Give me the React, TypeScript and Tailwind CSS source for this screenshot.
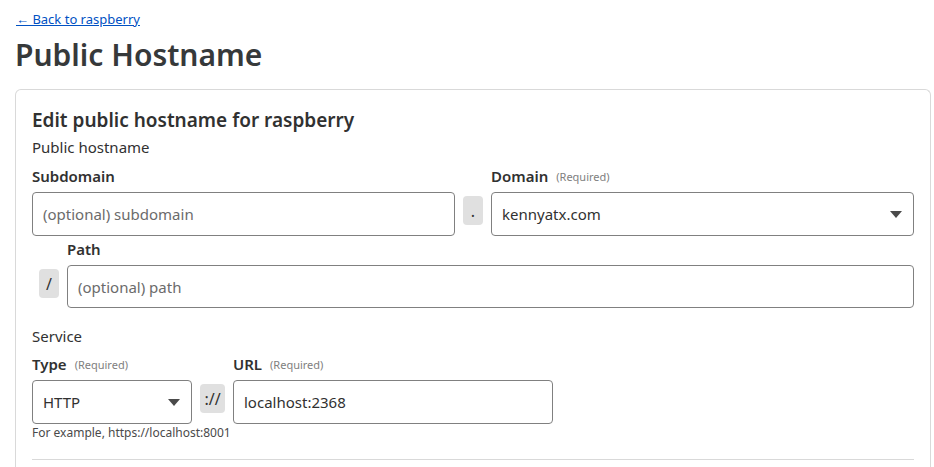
import React from 'react';

const font = { fontFamily: '"Noto Sans", "Open Sans", sans-serif' };

const Req = () => (
  <span className="ml-2 align-[1px] text-[11px] font-normal leading-none text-[#808080]">(Required)</span>
);

const Caret = () => (
  <svg width="12" height="7" viewBox="0 0 12 7" className="fill-[#4a4a4a]">
    <path d="M0 0h12L6 7z" />
  </svg>
);

const Chip = ({ text, w }: { text: string; w: string }) => (
  <div className={`flex h-[29px] ${w} items-center justify-center rounded-[4px] bg-[#e0e0e0] text-[16px] text-[#313131]`}>
    {text}
  </div>
);

export default function App() {
  return (
    <div className="min-h-screen bg-white pl-[15px] pr-[3px] pt-[6px] text-[#313131]" style={font}>
      <a href="#" className="ml-px text-[13px] text-[#0051c3] underline">
        ← Back to raspberry
      </a>
      <h1 className="mt-[5px] text-[30px] font-semibold leading-[40px] text-[#36393a]">Public Hostname</h1>

      <div className="mt-[14px] rounded-t-[6px] border border-b-0 border-[#d9d9d9] px-4 pt-[17px] pb-3">
        <h2 className="text-[19px] font-semibold leading-[26px]">Edit public hostname for raspberry</h2>
        <div className="mt-[4px] text-[15px] leading-[20px]">Public hostname</div>

        {/* subdomain / domain row */}
        <div className="mt-[9px] flex items-end gap-2">
          <div className="flex-1">
            <div className="h-[20px] text-[15px] font-semibold leading-[20px]">Subdomain</div>
            <input
              placeholder="(optional) subdomain"
              className="mt-[6px] h-[44px] w-full rounded-[4px] border border-[#808080] px-[10px] text-[15px] placeholder:text-[#6b6b6b] outline-none"
            />
          </div>
          <div className="mb-[11px]">
            <Chip text="." w="w-[20px]" />
          </div>
          <div className="flex-1">
            <div className="h-[20px] text-[15px] font-semibold leading-[20px]">
              Domain<Req />
            </div>
            <div className="mt-[6px] flex h-[44px] w-full items-center justify-between rounded-[4px] border border-[#808080] pl-[10px] pr-[11px] text-[15px]">
              <span>kennyatx.com</span>
              <Caret />
            </div>
          </div>
        </div>

        {/* path row */}
        <div className="mt-[3px] flex items-end gap-2 pl-[7px]">
          <div className="mb-[10px]">
            <Chip text="/" w="w-[20px]" />
          </div>
          <div className="flex-1">
            <div className="h-[20px] text-[15px] font-semibold leading-[20px]">Path</div>
            <input
              placeholder="(optional) path"
              className="mt-[6px] h-[43px] w-full rounded-[4px] border border-[#808080] px-[10px] text-[15px] placeholder:text-[#6b6b6b] outline-none"
            />
          </div>
        </div>

        <div className="mt-[18px] text-[15px] leading-[20px]">Service</div>

        {/* type / url row */}
        <div className="mt-[8px] flex items-end gap-2">
          <div className="w-[160px]">
            <div className="h-[20px] text-[15px] font-semibold leading-[20px]">
              Type<Req />
            </div>
            <div className="mt-[6px] flex h-[44px] w-full items-center justify-between rounded-[4px] border border-[#808080] pl-[10px] pr-[11px] text-[15px]">
              <span>HTTP</span>
              <Caret />
            </div>
          </div>
          <div className="mb-[11px]">
            <Chip text="://" w="w-[25px]" />
          </div>
          <div className="w-[320px]">
            <div className="h-[20px] text-[15px] font-semibold leading-[20px]">
              URL<Req />
            </div>
            <input
              defaultValue="localhost:2368"
              className="mt-[6px] h-[44px] w-full rounded-[4px] border border-[#808080] px-[10px] text-[15px] text-[#313131] outline-none"
            />
          </div>
        </div>
        <div className="mt-[1px] text-[12px] leading-[16px] text-[#4a4a4a]">For example, https://localhost:8001</div>

        <div className="mt-[18px] border-t border-[#d9d9d9]" />
      </div>
    </div>
  );
}
